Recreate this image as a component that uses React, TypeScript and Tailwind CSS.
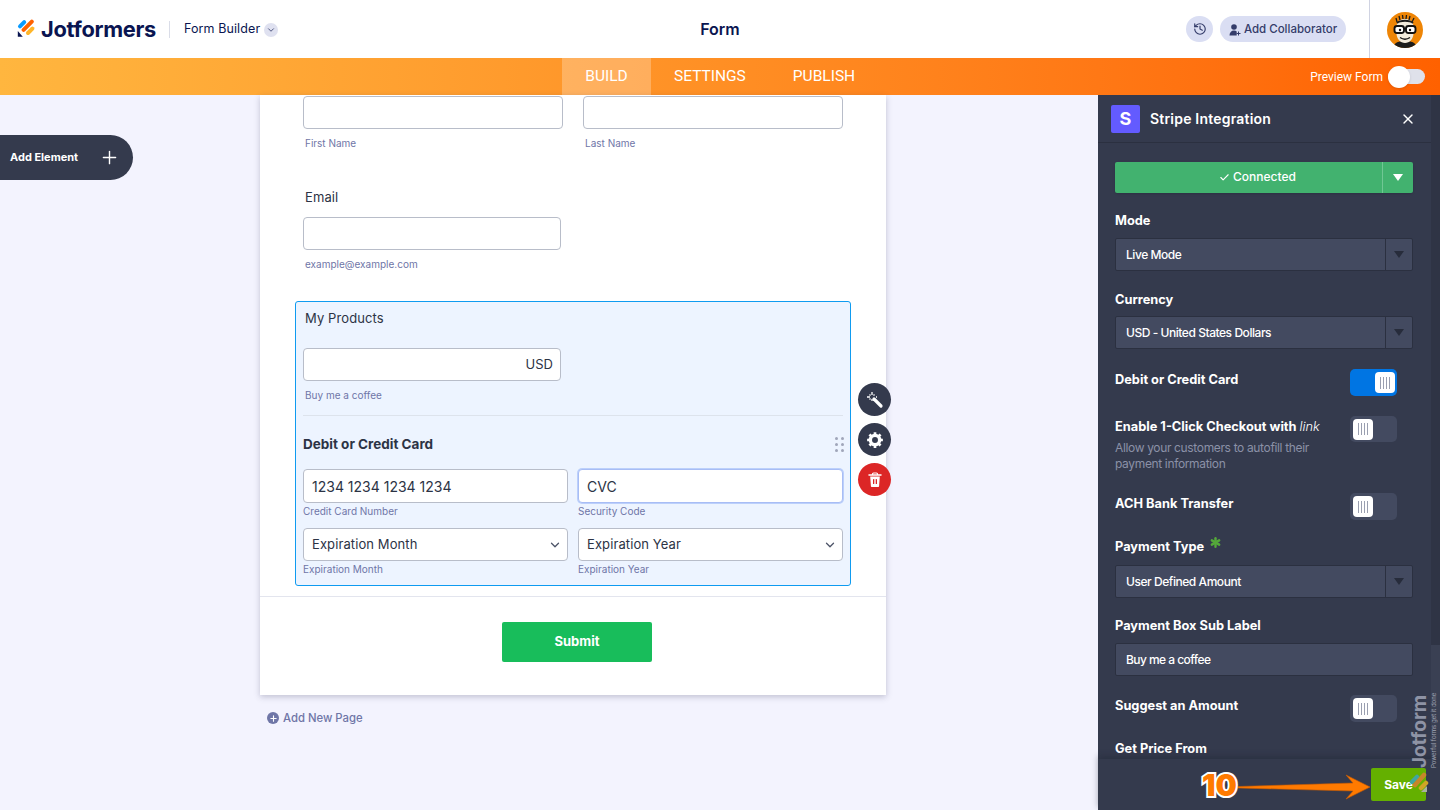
import React from 'react';
import { Asterisk, ChevronDown, History, Plus, X, Check } from 'lucide-react';

const Logo = () => (
  <svg width="20" height="20" viewBox="0 0 20 20">
    <path d="M7.2 3.2 L3 7.4" stroke="#0a9bff" strokeWidth="4" strokeLinecap="round" />
    <path d="M14.8 2.6 L6.6 10.8" stroke="#ff6100" strokeWidth="4" strokeLinecap="round" />
    <path d="M15.4 9.6 L11 14" stroke="#ffb629" strokeWidth="4" strokeLinecap="round" />
    <path d="M0.8 12 L5.8 17.8 L0.8 17.8 Z" fill="#0a1551" />
  </svg>
);

const Avatar = () => (
  <svg width="36" height="36" viewBox="0 0 36 36">
    <defs>
      <clipPath id="avatar-clip"><circle cx="18" cy="18" r="18" /></clipPath>
    </defs>
    <g clipPath="url(#avatar-clip)">
      <rect width="36" height="36" fill="#ee8506" />
      <path d="M6 36c1-6 6-7 12-7s11 1 12 7z" fill="#1c1c1c" />
      <path d="M9.5 15c0-6 4-8 8.5-8s8.500 2 8.500 8v6c0 6-4 10-8.500 10s-8.500-4-8.500-10z" fill="#f2ebdc" />
      <path d="M10 10l-1-4M13 8l-1-4M16 7l-.5-4M19 7l.5-4M22 8l1-4M25 10l2-4" stroke="#1c1c1c" strokeWidth="1.3" />
      <path d="M10 11c3-3 13-3 16 0" stroke="#1c1c1c" strokeWidth="1.8" fill="none" />
      <rect x="7.500" y="14" width="9.500" height="7" rx="2.500" fill="#fff" stroke="#111" strokeWidth="1.900" />
      <rect x="19" y="14" width="9.500" height="7" rx="2.500" fill="#fff" stroke="#111" strokeWidth="1.900" />
      <path d="M17 16.500h2" stroke="#111" strokeWidth="1.500" />
      <circle cx="13" cy="18" r="1.200" fill="#111" />
      <circle cx="23" cy="18" r="1.200" fill="#111" />
      <path d="M13 25.500c3 2 7 2 10 0" stroke="#111" strokeWidth="1.500" fill="none" />
    </g>
  </svg>
);

const Toggle = ({ on, className }: { on?: boolean; className?: string }) => (
  <div className={`flex w-[47px] shrink-0 items-center rounded-[5px] ${on ? 'justify-end bg-[#0075e3] pr-[2px]' : 'justify-start bg-[#434a60] pl-[3px]'} ${className || 'h-[26px]'}`}>
    <div className="flex h-[21px] w-[20px] items-center justify-center gap-[2px] rounded-[4px] bg-white">
      <span className="h-[12px] w-px bg-[#9a9fb0]" />
      <span className="h-[12px] w-px bg-[#9a9fb0]" />
      <span className="h-[12px] w-px bg-[#9a9fb0]" />
      <span className="h-[12px] w-px bg-[#9a9fb0]" />
    </div>
  </div>
);

const DarkSelect = ({ value }: { value: string }) => (
  <div className="flex h-[33px] w-[298px] items-center rounded-[2px] border border-[#2b3040] bg-[#434a60]">
    <span className="flex-1 pl-[10px] text-[12px] font-medium tracking-[-0.45px] text-white">{value}</span>
    <div className="flex h-full w-[27px] items-center justify-center border-l border-[#2b3040]">
      <span className="h-0 w-0 border-x-[5px] border-t-[7px] border-x-transparent border-t-[#272c3b]" />
    </div>
  </div>
);

const SideLabel = ({ children, className }: { children: React.ReactNode; className: string }) => (
  <div className={`text-[12.8px] leading-[16px] font-bold text-white ${className}`}>{children}</div>
);

const FormInput = ({ className, children }: { className: string; children?: React.ReactNode }) => (
  <div className={`flex items-center rounded-[4px] border bg-white text-[#2c3345] ${className}`}>
    {children}
  </div>
);

const SubLabel = ({ children, className }: { children: React.ReactNode; className?: string }) => (
  <div className={`text-[10px] leading-[13px] text-[#6f76a7] ${className || ''}`}>{children}</div>
);

export default function App() {
  return (
    <div className="relative flex h-[810px] w-[1440px] flex-col overflow-hidden bg-[#f3f3fe] font-['Inter',sans-serif]">
      {/* top header */}
      <header className="flex h-[58px] shrink-0 items-center bg-white">
        <div className="flex w-[560px] items-center pl-[17px]">
          <Logo />
          <span className="ml-[4px] text-[21.8px] font-bold tracking-[-0.3px] text-[#0a1551]">Jotformers</span>
          <span className="mr-[14px] ml-[13px] h-[17px] w-px bg-[#dadde8]" />
          <span className="mt-[1px] text-[12.5px] tracking-[0.1px] text-[#0a1551]">Form Builder</span>
          <span className="mt-[1px] ml-[4px] flex h-[14px] w-[14px] items-center justify-center rounded-full bg-[#dfe1f0]">
            <ChevronDown size={10} className="text-[#343c6a]" />
          </span>
        </div>
        <div className="w-[320px] text-center text-[16px] font-semibold text-[#0a1551]">Form</div>
        <div className="flex flex-1 items-center justify-end">
          <span className="flex h-[26px] w-[27px] items-center justify-center rounded-full bg-[#dadef3]">
            <History size={14} className="text-[#343c6a]" />
          </span>
          <span className="ml-[7px] flex h-[26px] w-[126px] items-center justify-center gap-[3px] rounded-full bg-[#dadef3] pt-px text-[11.5px] font-medium text-[#343c6a]">
            <svg width="12" height="12" viewBox="0 0 12 12" fill="#343c6a">
              <circle cx="5" cy="3" r="2.8" />
              <path d="M0.5 11.5c0-3 1.8-5 4.5-5 1.200 0 2 .3 2.700.9v4.100z" />
              <path d="M9 7.500h1v1.500h1.500v1H10v1.500H9V10H7.600V9H9z" />
            </svg>
            Add Collaborator
          </span>
          <span className="ml-[23px] h-[58px] w-px bg-[#d0d3e2]" />
          <div className="mx-[17px] mt-[1px] h-[36px] w-[36px]"><Avatar /></div>
        </div>
      </header>

      {/* orange nav */}
      <nav className="flex h-[37px] shrink-0 items-center bg-gradient-to-r from-[#ffb63f] via-[#ff8f24] to-[#ff6100] font-['Roboto',sans-serif] text-white">
        <div className="w-[562px]" />
        <div className="flex h-full w-[89px] items-center justify-center bg-white/25 text-[15.5px]">BUILD</div>
        <div className="ml-[23px] text-[15.5px]">SETTINGS</div>
        <div className="ml-[47px] text-[15.5px]">PUBLISH</div>
        <div className="ml-auto flex items-center pr-[15px]">
          <span className="mr-[5px] text-[12px]">Preview Form</span>
          <div className="relative h-[15px] w-[37px] rounded-full bg-[#dfe1ea]">
            <span className="absolute -top-[3px] left-0 h-[22px] w-[22px] rounded-full bg-white shadow" />
          </div>
        </div>
      </nav>

      <div className="flex min-h-0 flex-1">
        {/* canvas */}
        <main className="relative flex w-[1098px] flex-col pl-[260px]">
          <div className="absolute top-[40px] left-0 flex h-[45px] w-[133px] items-center justify-between rounded-r-full bg-[#343a4d] pr-[13px] pl-[10px] text-white">
            <span className="text-[11px] font-bold">Add Element</span>
            <Plus size={21} strokeWidth={1.6} />
          </div>

          <div className="flex h-[600px] w-[626px] flex-col bg-white shadow-[0_2px_6px_rgba(42,42,80,0.25)]">
            <div className="flex gap-[20px] pl-[43px]">
              <div>
                <FormInput className="mt-px h-[33px] w-[260px] border-[#b8bdc9]" />
                <SubLabel className="mt-[8px] ml-[2px]">First Name</SubLabel>
              </div>
              <div>
                <FormInput className="mt-px h-[33px] w-[260px] border-[#b8bdc9]" />
                <SubLabel className="mt-[8px] ml-[2px]">Last Name</SubLabel>
              </div>
            </div>

            <div className="mt-[39px] ml-[45px] text-[13px] leading-[16px] tracking-[0.1px] text-[#2c3345]">Email</div>
            <FormInput className="mt-[12px] ml-[43px] h-[33px] w-[258px] border-[#b8bdc9]" />
            <SubLabel className="mt-[8px] ml-[45px]">example@example.com</SubLabel>

            {/* selected payment field */}
            <div className="relative mt-[30px] ml-[35px] h-[285px] w-[556px] rounded-[3px] border border-[#0f9bf0] bg-[#edf4ff] pl-[7px]">
              <div className="mt-[8px] ml-[2px] text-[13px] leading-[16px] tracking-[0.1px] text-[#2c3345]">My Products</div>
              <FormInput className="mt-[22px] h-[33px] w-[258px] justify-end border-[#b8bdc9] pr-[7px] text-[13px]">USD</FormInput>
              <SubLabel className="mt-[8px] ml-[2px]">Buy me a coffee</SubLabel>
              <div className="mt-[13px] mr-[7px] h-px bg-[#dde3ec]" />
              <div className="mt-[20px] flex items-center justify-between pr-[6px]">
                <span className="text-[13.5px] leading-[16px] font-bold text-[#2c3345]">Debit or Credit Card</span>
                <div className="grid grid-cols-2 gap-[3px]">
                  <span className="h-[3px] w-[3px] rounded-full bg-[#a0a6ba]" />
                  <span className="h-[3px] w-[3px] rounded-full bg-[#a0a6ba]" />
                  <span className="h-[3px] w-[3px] rounded-full bg-[#a0a6ba]" />
                  <span className="h-[3px] w-[3px] rounded-full bg-[#a0a6ba]" />
                  <span className="h-[3px] w-[3px] rounded-full bg-[#a0a6ba]" />
                  <span className="h-[3px] w-[3px] rounded-full bg-[#a0a6ba]" />
                </div>
              </div>
              <div className="mt-[17px] grid w-[540px] grid-cols-2 gap-x-[10px] gap-y-[10px]">
                <div>
                  <FormInput className="h-[34px] border-[#b8bdc9] pl-[8px] text-[14px]">1234 1234 1234 1234</FormInput>
                  <SubLabel className="mt-[2px]">Credit Card Number</SubLabel>
                </div>
                <div>
                  <FormInput className="h-[34px] border-[#a8bdf5] pl-[8px] text-[14px] shadow-[0_0_0_1px_#bcd0fb]">CVC</FormInput>
                  <SubLabel className="mt-[2px]">Security Code</SubLabel>
                </div>
                <div>
                  <FormInput className="h-[33px] justify-between border-[#b8bdc9] pr-[5px] pl-[8px] text-[13px] tracking-[0.1px]">
                    Expiration Month
                    <ChevronDown size={14} strokeWidth={2.2} className="text-[#4d5468]" />
                  </FormInput>
                  <SubLabel className="mt-[2px]">Expiration Month</SubLabel>
                </div>
                <div>
                  <FormInput className="h-[33px] justify-between border-[#b8bdc9] pr-[5px] pl-[8px] text-[13px] tracking-[0.1px]">
                    Expiration Year
                    <ChevronDown size={14} strokeWidth={2.2} className="text-[#4d5468]" />
                  </FormInput>
                  <SubLabel className="mt-[2px]">Expiration Year</SubLabel>
                </div>
              </div>

              {/* floating actions */}
              <div className="absolute top-[81px] left-[562px] flex flex-col gap-[7px]">
                <span className="flex h-[33px] w-[33px] items-center justify-center rounded-full bg-[#343a4d]">
                  <svg width="18" height="18" viewBox="0 0 18 18" fill="none" stroke="#fff">
                    <path d="M8 8l7 7" strokeWidth="3.2" strokeLinecap="round" />
                    <path d="M6 1v3M6 8v2M1 6h3M8.500 3.500L7.500 4.500M3.500 3.500l1 1M3.500 8.500l1-1M10 6h1" strokeWidth="1.300" />
                  </svg>
                </span>
                <span className="flex h-[33px] w-[33px] items-center justify-center rounded-full bg-[#343a4d]">
                  <svg width="18" height="18" viewBox="0 0 24 24" fill="none" stroke="#fff">
                    <circle cx="12" cy="12" r="6.200" strokeWidth="4.500" />
                    <path d="M12 1.500v4M12 18.500v4M1.500 12h4M18.500 12h4M4.600 4.600l2.800 2.800M16.600 16.600l2.800 2.800M4.600 19.400l2.800-2.800M16.600 7.400l2.800-2.800" strokeWidth="3.600" />
                  </svg>
                </span>
                <span className="flex h-[33px] w-[33px] items-center justify-center rounded-full bg-[#dc2626]">
                  <svg width="14" height="16" viewBox="0 0 14 16">
                    <path d="M1 3h12" stroke="#fff" strokeWidth="1.500" strokeLinecap="round" />
                    <path d="M4.500 3V2c0-.6.4-1 1-1h3c.6 0 1 .4 1 1v1" stroke="#fff" strokeWidth="1.200" fill="none" />
                    <path d="M2.200 4.500h9.600l-.7 9.500c0 .6-.5 1-1 1H3.900c-.5 0-1-.4-1-1z" fill="#fff" />
                    <rect x="5" y="7" width="1.300" height="5" rx="0.600" fill="#dc2626" />
                    <rect x="7.700" y="7" width="1.300" height="5" rx="0.600" fill="#dc2626" />
                  </svg>
                </span>
              </div>
            </div>

            <div className="mt-[10px] h-px bg-[#e3e5ee]" />
            <div className="mt-[25px] flex justify-center pl-[8px]">
              <div className="flex h-[40px] w-[150px] items-center justify-center rounded-[2px] bg-[#18bd5b] text-[13px] font-bold text-white">Submit</div>
            </div>
          </div>

          <div className="mt-[15px] ml-[7px] flex items-center gap-[4px] text-[11.3px] font-medium text-[#6f76a7]">
            <span className="flex h-[12px] w-[12px] items-center justify-center rounded-full bg-[#6f76a7] text-white">
              <Plus size={9} strokeWidth={3} />
            </span>
            Add New Page
          </div>
        </main>

        {/* stripe panel */}
        <aside className="relative flex w-[342px] flex-col bg-[#343a4d]">
          <div className="flex h-[48px] w-[333px] shrink-0 items-center border-b border-[#2b3040] pr-[15px] pl-[13px]">
            <span className="flex h-[28px] w-[29px] items-center justify-center rounded-[2px] bg-[#635bff] text-[18px] font-bold text-white">S</span>
            <span className="ml-[10px] flex-1 text-[14px] font-semibold tracking-[0.2px] text-white">Stripe Integration</span>
            <X size={16} strokeWidth={2} className="text-white" />
          </div>

          <div className="flex w-[333px] flex-1 flex-col overflow-hidden pl-[17px]">
            <div className="mt-[19px] flex h-[31px] w-[298px] shrink-0 items-center rounded-[2px] bg-[#42b26f] text-white shadow">
              <div className="flex flex-1 items-center justify-center gap-[3px] pb-px pl-[18px] text-[12px] font-medium">
                <Check size={11} strokeWidth={2.4} />
                Connected
              </div>
              <div className="flex h-full w-[31px] items-center justify-center border-l border-[#70c794]">
                <span className="h-0 w-0 border-x-[5px] border-t-[7px] border-x-transparent border-t-white" />
              </div>
            </div>

            <SideLabel className="mt-[20px]">Mode</SideLabel>
            <div className="mt-[9px]"><DarkSelect value="Live Mode" /></div>
            <SideLabel className="mt-[21px]">Currency</SideLabel>
            <div className="mt-[8px]"><DarkSelect value="USD - United States Dollars" /></div>

            <div className="mt-[20px] flex w-[282px] items-start justify-between">
              <SideLabel className="mt-[3px]">Debit or Credit Card</SideLabel>
              <Toggle on className="h-[27px]" />
            </div>
            <div className="mt-[20px] flex w-[282px] items-start justify-between">
              <div>
                <SideLabel className="mt-[3px] whitespace-nowrap">
                  Enable 1-Click Checkout with <span className="font-light italic">link</span>
                </SideLabel>
                <div className="mt-[5px] w-[215px] text-[12px] leading-[16px] tracking-[-0.35px] text-[#8b91a7]">
                  Allow your customers to autofill their payment information
                </div>
              </div>
              <Toggle />
            </div>
            <div className="mt-[21px] flex w-[282px] items-start justify-between">
              <SideLabel className="mt-[3px]">ACH Bank Transfer</SideLabel>
              <Toggle className="h-[27px]" />
            </div>
            <SideLabel className="mt-[19px] flex items-start">
              Payment Type
              <Asterisk size={17} strokeWidth={3.4} className="mt-[-5px] ml-[3px] text-[#54a83a]" />
            </SideLabel>
            <div className="mt-[10px]"><DarkSelect value="User Defined Amount" /></div>
            <SideLabel className="mt-[20px]">Payment Box Sub Label</SideLabel>
            <div className="mt-[9px] flex h-[33px] w-[298px] shrink-0 items-center rounded-[2px] border border-[#2b3040] bg-[#434a60] pl-[10px] text-[12px] font-medium tracking-[-0.55px] text-white">
              Buy me a coffee
            </div>
            <div className="mt-[19px] flex w-[282px] items-start justify-between">
              <SideLabel className="mt-[3px]">Suggest an Amount</SideLabel>
              <Toggle className="h-[27px]" />
            </div>
            <SideLabel className="mt-[19px]">Get Price From</SideLabel>
          </div>

          <div className="z-10 flex h-[51px] shrink-0 items-center justify-end bg-[#343a4d] pr-[14px] shadow-[0_-3px_6px_rgba(30,34,48,0.35)]">
            <div className="flex h-[33px] w-[55px] items-center justify-center rounded-[2px] bg-[#64b000] text-[12px] font-bold text-white">Save</div>
          </div>

          <div className="absolute top-0 right-0 bottom-[51px] flex w-[9px] flex-col">
            <div className="h-[550px] bg-[#2f3445]" />
            <div className="flex-1 bg-[#3a4053]" />
          </div>
        </aside>
      </div>

      {/* watermark and tutorial annotation over the panel */}
      <div className="absolute top-[768px] left-[1410px] z-20 origin-top-left -rotate-90 whitespace-nowrap text-[19px] leading-[19px] font-bold text-[#8e93a5]">
        Jotform
      </div>
      <div className="absolute top-[768px] left-[1430px] z-20 origin-top-left -rotate-90 whitespace-nowrap text-[6px] leading-[8px] text-[#a3a7b6]">
        Powerful forms get it done
      </div>
      <div className="absolute top-[768px] left-[1202px] z-20 text-[30px] leading-[34px] font-black text-[#ff7a00] [-webkit-text-stroke:4px_white] [paint-order:stroke_fill]">10</div>
      <svg className="absolute top-[772px] left-[1238px] z-20" width="134" height="30" viewBox="0 0 134 30">
        <path d="M0 14.500 L115 11 L108 3 L132 15 L108 27 L115 19 L0 16 Z" fill="#ff7a00" stroke="#c85a00" strokeWidth="0.6" />
      </svg>
      <svg className="absolute top-[772px] left-[1409px] z-20" width="20" height="26" viewBox="0 0 20 26">
        <path d="M8 5 L3 10" stroke="#3fa6a0" strokeWidth="4.500" strokeLinecap="round" />
        <path d="M15 3 L6 13" stroke="#c6862a" strokeWidth="4.500" strokeLinecap="round" />
        <path d="M17 11 L12 16" stroke="#d0a526" strokeWidth="4.500" strokeLinecap="round" />
        <path d="M12 20 L18 20 L18 14 Z" fill="#a8b0a0" />
      </svg>
    </div>
  );
}
